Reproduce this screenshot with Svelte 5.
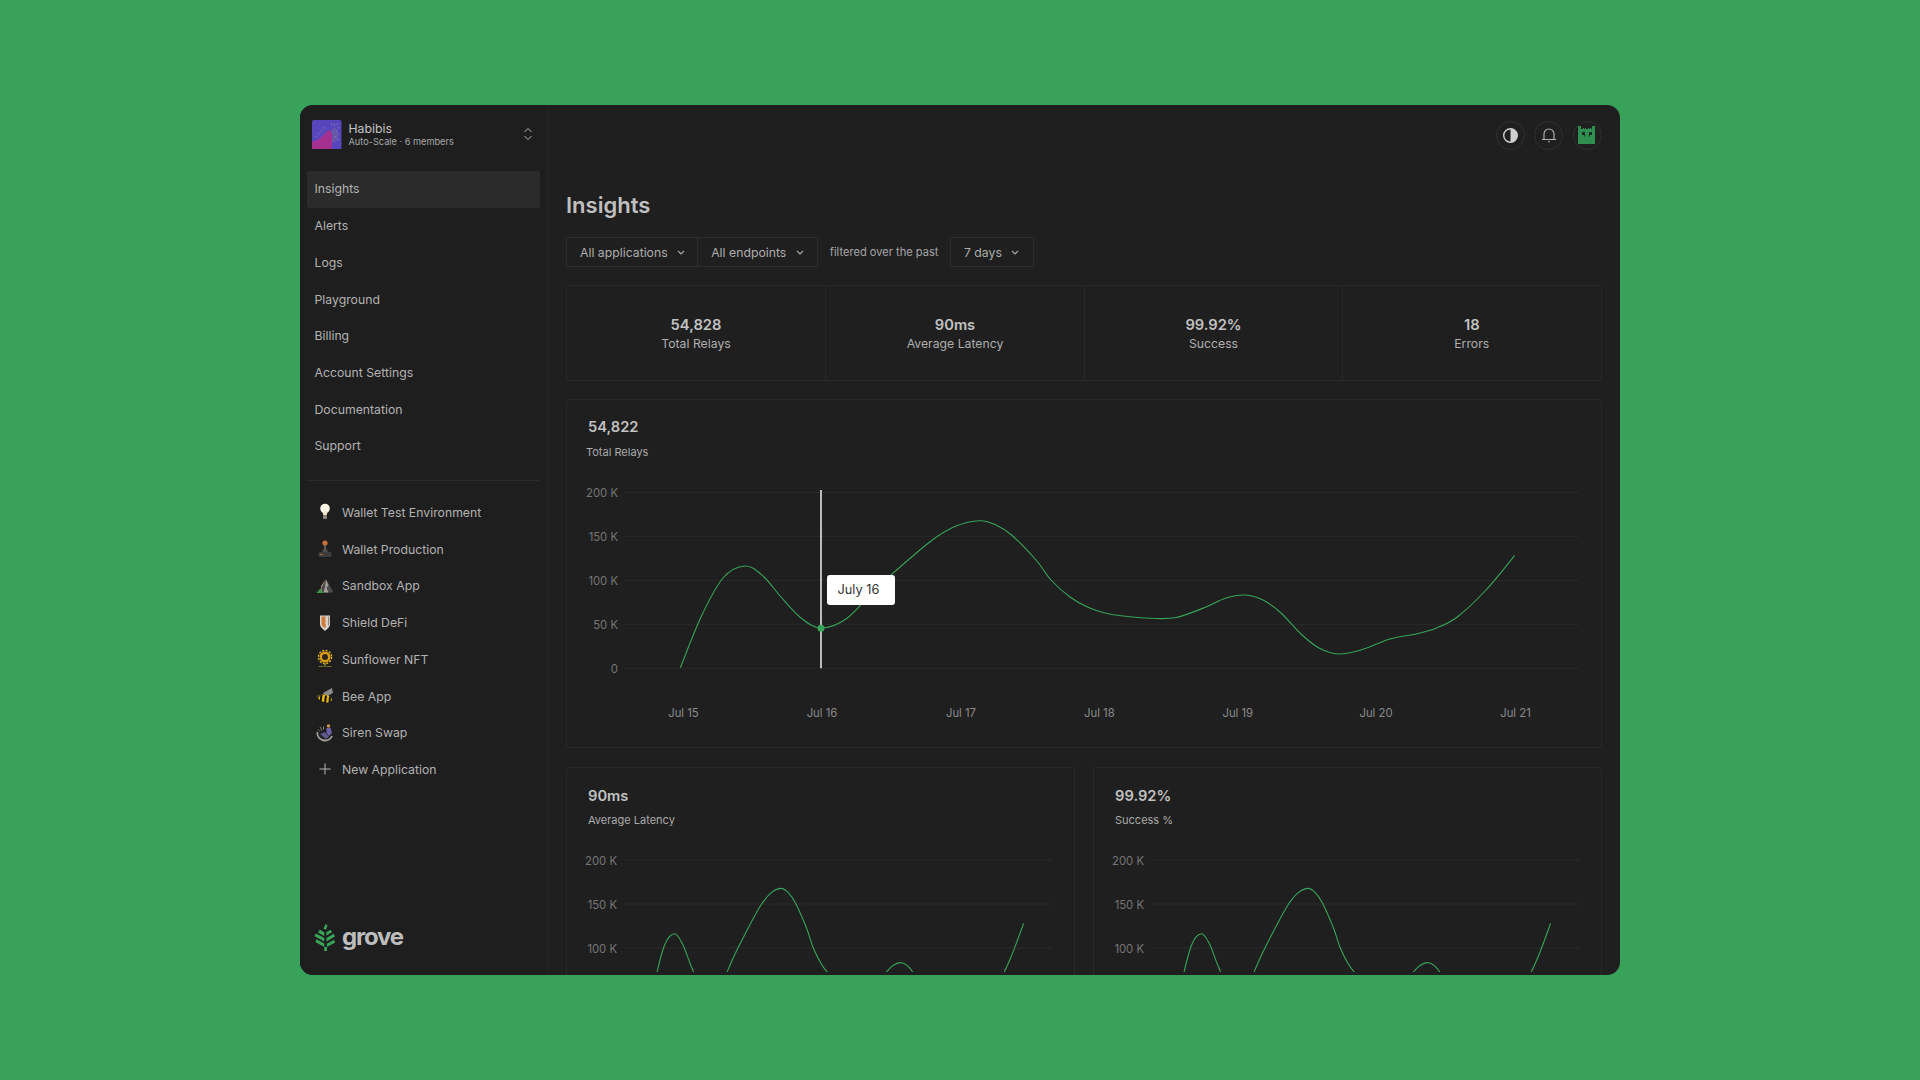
<script>
  const nav = ['Insights','Alerts','Logs','Playground','Billing','Account Settings','Documentation','Support'];
  const apps = [
    ['bulb','Wallet Test Environment'],['joy','Wallet Production'],['mount','Sandbox App'],['shield','Shield DeFi'],
    ['sun','Sunflower NFT'],['bee','Bee App'],['siren','Siren Swap'],['plus','New Application']
  ];
  const stats = [['54,828','Total Relays'],['90ms','Average Latency'],['99.92%','Success'],['18','Errors']];
  const raw = [[679.3,667.7],[700,617],[722,578],[744,566],[762,576],[780,597],[800,618],[820,628],[845,619],[870,594],[890,575],[930,541],[955,526],[979,520.7],[995,525],[1010.5,535],[1035,560],[1050,580],[1069,597],[1087,607.3],[1103,612.7],[1120,615.7],[1150,618.3],[1175,617.5],[1205,607],[1225,598],[1244,595],[1262,600],[1280,613],[1300,634],[1318,648],[1337,654],[1360,650],[1389,639],[1415,634],[1435.6,628],[1456.6,616.7],[1485,590],[1513.5,555.7]];
  const ticks = ['200 K','150 K','100 K','50 K','0'];
  const days = [[682.5,'Jul 15'],[821,'Jul 16'],[960,'Jul 17'],[1098.4,'Jul 18'],[1236.8,'Jul 19'],[1375,'Jul 20'],[1514.5,'Jul 21']];

  function smooth(pts) {
    let d = `M${pts[0][0].toFixed(1)} ${pts[0][1].toFixed(1)}`;
    for (let i = 0; i < pts.length - 1; i++) {
      const p0 = pts[i - 1] || pts[i], p1 = pts[i], p2 = pts[i + 1], p3 = pts[i + 2] || p2;
      const c1x = p1[0] + (p2[0] - p0[0]) / 6, c1y = p1[1] + (p2[1] - p0[1]) / 6;
      const c2x = p2[0] - (p3[0] - p1[0]) / 6, c2y = p2[1] - (p3[1] - p1[1]) / 6;
      d += `C${c1x.toFixed(1)} ${c1y.toFixed(1)} ${c2x.toFixed(1)} ${c2y.toFixed(1)} ${p2[0].toFixed(1)} ${p2[1].toFixed(1)}`;
    }
    return d;
  }
  const mainPath = smooth(raw);
  const smallPath = smooth(raw.map(([x, y]) => [0.454 * x - 230.5, y - 492.3]));
</script>

{#snippet chevron()}
  <svg class="chev" width="8" height="5" viewBox="0 0 8 5"><path d="M1 1l3 3 3-3" fill="none" stroke="#a8a8a8" stroke-width="1.1"/></svg>
{/snippet}

{#snippet icon(kind)}
  <svg class="appicon" width="20" height="20" viewBox="0 0 20 20">
    {#if kind === 'bulb'}
      <circle cx="10" cy="6.500" r="4.800" fill="#fbf3e4"/><path d="M7.500 9.500h5l-.8 4h-3.400z" fill="#f3e3c8"/><rect x="8" y="13.500" width="4" height="3.500" rx="1" fill="#8d8678"/>
    {:else if kind === 'joy'}
      <circle cx="10" cy="4" r="2.600" fill="#c8703a"/><rect x="9.300" y="6" width="1.400" height="6" fill="#7b7468"/><rect x="7.500" y="10.500" width="5" height="3" fill="#4e4c48"/><rect x="3.500" y="13" width="13" height="5" rx="1" fill="#3c3c3c"/><rect x="5" y="15" width="3" height="1" fill="#b06a3a"/>
    {:else if kind === 'mount'}
      <path d="M11 3l7.500 13.500H2.500z" fill="#4c4c4c"/><path d="M11 3L6 10l1 6.500H4z" fill="#b08e78"/><path d="M11 4l2.500 5-2 3 2 4.500H8.500l1.500-5z" fill="#a5a09a"/><path d="M1.500 17l3.500-4 3.500 4z" fill="#3a9a55"/>
    {:else if kind === 'shield'}
      <path d="M5 2.500h10v9c0 2.500-3 4.500-5 6.500-2-2-5-4-5-6.500z" fill="#d9d4cb"/><path d="M6.500 3.500h4.500l-1 2.500 1 2-1 2 1 2-1 3.500c-2-1.500-3.500-3-3.500-5z" fill="#cf7c3c"/><path d="M13 3.500h1.200v7c0 1-.7 2-1.200 2.500z" fill="#8f8a82"/>
    {:else if kind === 'sun'}
      <circle cx="10" cy="8" r="5.500" fill="#d99d12"/><circle cx="10" cy="8" r="3" fill="#2c2412"/><circle cx="10" cy="8" r="6.600" fill="none" stroke="#e8b320" stroke-width="1.400" stroke-dasharray="2 1.500"/><rect x="9.300" y="14" width="1.400" height="4" fill="#6f8c3a"/><path d="M3.500 17h5v1h-5zM11.500 17h5v1h-5z" fill="#7f6a30"/>
    {:else if kind === 'bee'}
      <path d="M8 7l9-5 1 5-7 4z" fill="#8a8a8a"/><ellipse cx="10" cy="12.500" rx="7" ry="3.800" fill="#e8b418" transform="rotate(12 10 12.500)"/><path d="M6.500 8.500l-1 7.500M11 9.500l-1 7.500M15 10.500l-.5 6.500" stroke="#141310" stroke-width="2"/><circle cx="2.800" cy="10" r="1.800" fill="#3a352c"/>
    {:else if kind === 'siren'}
      <circle cx="13.500" cy="3" r="1.800" fill="#c98a48"/><path d="M11.500 5h4l1.500 5-3 3-2.500-3z" fill="#6a62a8"/><path d="M2.500 9c-1 4 2.500 8.500 7.500 8.500 3 0 6-2 7-4.500" fill="none" stroke="#a69f96" stroke-width="1.800"/><path d="M5 11l6 5 3-2-4-5z" fill="#5e5a8c"/><path d="M5 4l2 3.500M8.500 3.500v3M3 6.500l2 2" stroke="#8a8276" stroke-width="1"/>
    {:else}
      <path d="M10 4.500v11M4.500 10h11" stroke="#b4b4b4" stroke-width="1" fill="none"/>
    {/if}
  </svg>
{/snippet}

<div class="window">
  <aside class="side">
    <header class="team">
      <svg class="logo" width="29.500" height="29.500" viewBox="0 0 30 30">
        <rect width="30" height="30" rx="2" fill="#5647bd"/>
        <path d="M0 22c5-1 9-3 12-7 2-3 5-5 7-4 2 3 2 9 1 19H0z" fill="#a62f92"/>
        <path d="M19 11c2 3 2 9 1 13l6-4c1-4 0-10-2-13z" fill="#6d5ca8" opacity=".8"/>
        <g fill="#9a86b0">
          <circle cx="20" cy="4" r=".6"/><circle cx="23" cy="5" r=".6"/><circle cx="26" cy="4" r=".6"/><circle cx="27" cy="8" r=".6"/><circle cx="25" cy="11" r=".6"/><circle cx="27" cy="14" r=".6"/><circle cx="24" cy="17" r=".6"/><circle cx="27" cy="20" r=".6"/><circle cx="10" cy="11" r=".6"/><circle cx="7" cy="14" r=".6"/><circle cx="4" cy="17" r=".6"/><circle cx="13" cy="8" r=".6"/>
        </g>
      </svg>
      <div class="teamtext">
        <div class="teamname">Habibis</div>
        <div class="teamsub">Auto-Scale · 6 members</div>
      </div>
      <svg class="updown" width="10" height="14" viewBox="0 0 10 14"><path d="M1.500 5L5 1.500 8.500 5M1.500 9L5 12.500 8.500 9" fill="none" stroke="#b0b0b0" stroke-width="1"/></svg>
    </header>
    <nav class="nav">
      {#each nav as item, i}
        <div class="row" class:active={i === 0}>{item}</div>
      {/each}
    </nav>
    <div class="divider"></div>
    <div class="nav">
      {#each apps as [kind, name]}
        <div class="row app">{@render icon(kind)}<span>{name}</span></div>
      {/each}
    </div>
    <div class="brand">
      <svg width="24" height="27" viewBox="0 0 24 27" fill="#37a45a">
        <path d="M11.200 23h2.800v4h-2.800z"/>
        <path d="M11.300 23l-9-5 1.200-2.800 7.800 4.300zM13.900 23l8.300-4.600-1.200-2.700-7.100 4z"/>
        <path d="M11.300 17.500l-10-5.500L3 9.500l8.300 4.600zM13.500 17.500l8.500-5-1.300-2.700-7.200 4.200z"/>
        <path d="M11.300 12L5 8.500 6.800 5.500l4.500 3zM13.300 11.500l5.700-3.300-1.300-2.500-4.400 2.500z"/>
        <path d="M10.500 4.800L12.500 0l2 1.200-1.500 4.500z"/>
      </svg>
      <span>grove</span>
    </div>
  </aside>

  <main class="main">
    <div class="top">
      <div class="round">
        <svg width="17" height="17" viewBox="0 0 17 17"><circle cx="8.500" cy="8.500" r="6.800" fill="none" stroke="#cfcfcf" stroke-width="1.400"/><path d="M8.500 1.700a6.800 6.800 0 0 1 0 13.600z" fill="#cfcfcf"/></svg>
      </div>
      <div class="round">
        <svg width="20" height="20" viewBox="0 0 20 20"><path d="M3 14.500h14M5 14.500V9a5 5 0 0 1 10 0v5.500" fill="none" stroke="#b5b5b5" stroke-width="1.100"/><path d="M9 16.800h2" stroke="#b5b5b5" stroke-width="1.100"/></svg>
      </div>
      <div class="round">
        <svg width="20" height="20" viewBox="0 0 20 20">
          <path d="M1 1h3v3h2V3h1v1h1V3h1v1h2V3h1v1h1V3h1v1h1V1h3v18H1z" fill="#2f8f50"/>
          <rect x="5" y="7" width="3" height="3" fill="#1c2b21"/><rect x="12" y="7" width="3" height="3" fill="#1c2b21"/>
          <rect x="7" y="10" width="1.500" height="1.500" fill="#1f4a2d"/><rect x="11.500" y="10" width="1.500" height="1.500" fill="#1f4a2d"/>
        </svg>
      </div>
    </div>

    <h1>Insights</h1>

    <div class="filters">
      <div class="group">
        <div class="select">All applications{@render chevron()}</div>
        <div class="select second">All endpoints{@render chevron()}</div>
      </div>
      <span class="hint">filtered over the past</span>
      <div class="select single">7 days{@render chevron()}</div>
    </div>

    <section class="stats">
      {#each stats as [v, l]}
        <div class="stat"><strong>{v}</strong><span>{l}</span></div>
      {/each}
    </section>

    <section class="card big">
      <div class="value">54,822</div>
      <div class="label tight">Total Relays</div>
      <svg class="plot" width="1036" height="260" viewBox="566 480 1036 260">
        {#each ticks as t, i}
          <line x1="623" x2="1578" y1={492.3 + i * 44} y2={492.3 + i * 44} class="grid"/>
          <text x="617" y={496.8 + i * 44} text-anchor="end" class="tick">{t}</text>
        {/each}
        {#each days as [x, d]}
          <text x={x} y="716.5" text-anchor="middle" class="tick day">{d}</text>
        {/each}
        <path d={mainPath} class="line"/>
        <line x1="820" x2="820" y1="490" y2="668.300" stroke="#fff" stroke-width="1.400"/>
        <circle cx="820" cy="628.300" r="3.500" fill="#37a45a"/>
      </svg>
      <div class="tip">July 16</div>
    </section>

    <div class="pair">
      {#each [['90ms','Average Latency'],['99.92%','Success %']] as [v, l]}
        <section class="card small">
          <div class="value">{v}</div>
          <div class="label">{l}</div>
          <svg class="plot" width="508" height="120" viewBox="0 -8 508 120">
            {#each ticks.slice(0, 3) as t, i}
              <line x1="56.500" x2="486" y1={i * 44} y2={i * 44} class="grid"/>
              <text x="50" y={i * 44 + 4.500} text-anchor="end" class="tick">{t}</text>
            {/each}
            <path d={smallPath} class="line"/>
          </svg>
        </section>
      {/each}
    </div>
  </main>
</div>

<style>
  :global(body) { margin: 0; background: #38a15a; }
  .window {
    box-sizing: border-box; width: 1320px; height: 869.500px; margin: 105px auto 0;
    display: flex; overflow: hidden; border-radius: 13px; background: #1f1f1f;
    font-family: Inter, "Liberation Sans", sans-serif; color: #b4b4b4;
  }
  .side {
    box-sizing: border-box; width: 248px; flex: none; display: flex; flex-direction: column;
    background: #1e1e1e; border-right: 1px solid #262626; padding: 0 7px;
  }
  .team { display: flex; align-items: center; height: 58.500px; padding: 0 7px 0 5px; gap: 7px; flex: none; margin-bottom: 7.500px; }
  .logo { flex: none; }
  .teamtext { flex: 1; min-width: 0; }
  .teamname { font-size: 12.250px; line-height: 14px; color: #c4c4c4; }
  .teamsub { font-size: 9.200px; line-height: 11px; color: #a8a8a8; }
  .nav { display: flex; flex-direction: column; }
  .row {
    height: 36.730px; display: flex; align-items: center; padding-left: 7.500px;
    font-size: 12.250px; border-radius: 3px; color: #b2b2b2; padding-bottom: 1px; box-sizing: border-box;
  }
  .row.active { background: #2b2b2b; }
  .row.app { padding-left: 8px; gap: 7px; }
  .appicon { flex: none; }
  .divider { height: 1px; background: #2a2a2a; margin: 14.800px 0 14px; flex: none; }
  .brand { margin-top: auto; margin-bottom: 23.500px; display: flex; align-items: center; gap: 5px; padding-left: 6px; }
  .brand span { font-size: 24px; font-weight: 700; letter-spacing: -1.200px; color: #bdbdbd; line-height: 27px; margin-top: -3px; }

  .main { flex: 1; min-width: 0; padding: 0 18.500px 0 18px; }
  .top { height: 60px; display: flex; justify-content: flex-end; align-items: center; gap: 9.500px; }
  .round {
    box-sizing: border-box; width: 29px; height: 29px; border: 1px solid #2f2f2f; border-radius: 50%;
    display: flex; align-items: center; justify-content: center;
  }
  h1 { margin: 25px 0 17.300px; font-size: 22px; line-height: 30px; font-weight: 600; color: #c0c0c0; }
  .filters { display: flex; align-items: center; height: 29.500px; margin-bottom: 18.500px; }
  .group { display: flex; height: 100%; border: 1px solid #2d2d2d; border-radius: 3px; box-sizing: border-box; }
  .select { display: flex; align-items: center; gap: 9.500px; padding: 0 12px 0 13px; font-size: 12.250px; color: #adadad; white-space: nowrap; }
  .second { border-left: 1px solid #2d2d2d; padding-right: 13px; }
  .single { box-sizing: border-box; height: 100%; border: 1px solid #2d2d2d; border-radius: 3px; padding: 0 14px 0 12.500px; }
  .hint { font-size: 11.100px; color: #a6a6a6; margin: 0 12px; }
  .stats {
    box-sizing: border-box; height: 95.400px; display: grid; grid-template-columns: 258px 259px 258px 1fr;
    border: 1px solid #292929; border-radius: 3px; margin-bottom: 18.300px;
  }
  .stat { display: flex; flex-direction: column; align-items: center; padding-top: 30px; border-left: 1px solid #292929; }
  .stat:first-child { border-left: 0; }
  .stat strong { font-size: 14.700px; line-height: 18px; font-weight: 600; color: #c2c2c2; }
  .stat span { font-size: 12.250px; line-height: 19px; color: #aeaeae; }
  .card { box-sizing: border-box; border: 1px solid #292929; border-radius: 3px; position: relative; overflow: hidden; }
  .big { height: 349px; padding: 18.500px 0 0 21px; margin-bottom: 19.500px; }
  .value { font-size: 14.700px; line-height: 18.500px; font-weight: 600; color: #c2c2c2; }
  .label { font-size: 11px; line-height: 15px; color: #aaa; margin-top: 8px; }
  .label.tight { margin-left: -2px; }
  .plot { position: absolute; left: 0; display: block; }
  .big .plot { top: 80px; }
  .tip {
    position: absolute; left: 259.500px; top: 175.500px; box-sizing: border-box; width: 68px; height: 29.500px;
    background: #fff; border-radius: 3px; color: #333; font-size: 12.800px; line-height: 29.500px; padding-left: 11px;
  }
  .pair { display: grid; grid-template-columns: 508.500px 508.500px; justify-content: space-between; }
  .small { height: 220px; padding: 18.500px 0 0 21px; }
  .small .plot { top: 83.300px; }
  .grid { stroke: #2a2a2a; stroke-width: 1; }
  .tick { font-size: 11.300px; fill: #767676; font-family: Inter, "Liberation Sans", sans-serif; }
  .day { fill: #8a8a8a; }
  .line { fill: none; stroke: #37a45a; stroke-width: 1.100; }
  .chev { flex: none; }
</style>
